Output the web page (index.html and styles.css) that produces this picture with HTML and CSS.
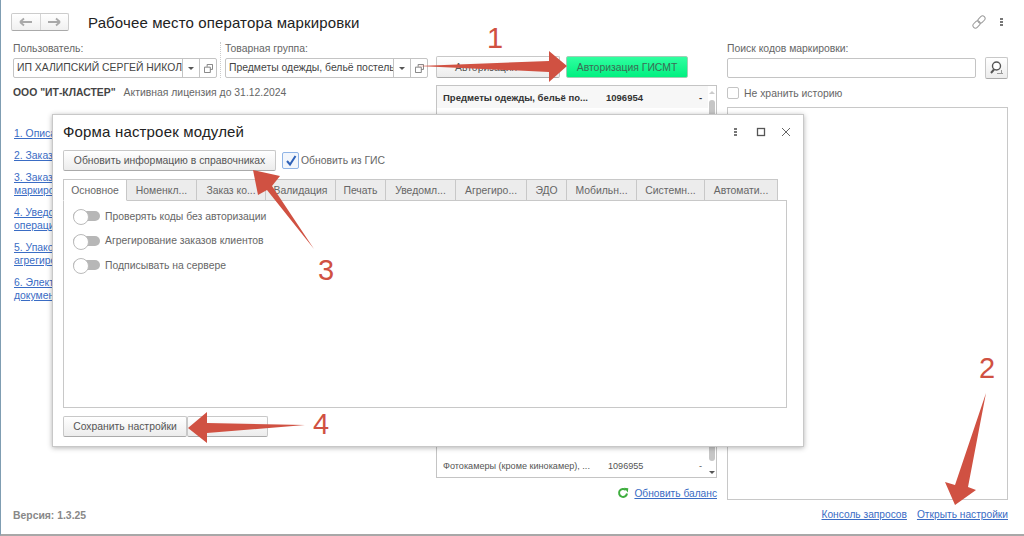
FILE: index.html
```html
<!DOCTYPE html>
<html lang="ru">
<head>
<meta charset="utf-8">
<title>Рабочее место оператора маркировки</title>
<link rel="stylesheet" href="styles.css">
</head>
<body>
<div class="page">
  <header class="head">
    <div class="nav">
      <button class="nav-btn"><svg width="16" height="10" viewBox="0 0 16 10"><path d="M2 5h12M2 5l4-3.500M2 5l4 3.500" fill="none" stroke="#a9a9a9" stroke-width="1.800"/></svg></button>
      <button class="nav-btn"><svg width="16" height="10" viewBox="0 0 16 10"><path d="M2 5h12M14 5l-4-3.500M14 5l-4 3.500" fill="none" stroke="#a9a9a9" stroke-width="1.800"/></svg></button>
    </div>
    <h1 class="title">Рабочее место оператора маркировки</h1>
    <div class="head-tools">
      <svg width="14" height="14" viewBox="0 0 14 14"><g transform="rotate(-45 7 7)" fill="none" stroke="#9a9a9a"><rect x="-0.500" y="4.500" width="8" height="5" rx="2.500"/><rect x="6.500" y="4.500" width="8" height="5" rx="2.500"/></g></svg>
      <span class="kebab"><i></i><i></i><i></i></span>
    </div>
  </header>

  <div class="main">
    <section class="col-left">
      <div class="fields">
        <div class="field">
          <label class="label">Пользователь:</label>
          <div class="combo">
            <span class="combo-text">ИП ХАЛИПСКИЙ СЕРГЕЙ НИКОЛАЕВИЧ</span>
            <span class="combo-btn"><b class="caret"></b></span>
            <span class="combo-btn"><svg width="9" height="9" viewBox="0 0 10 10"><path d="M3.500 3V.500h6V6H7M.500 3.500H7v6H.500z" fill="none" stroke="#777"/></svg></span>
          </div>
        </div>
        <div class="field field-sep">
          <label class="label">Товарная группа:</label>
          <div class="combo">
            <span class="combo-text">Предметы одежды, бельё постельное</span>
            <span class="combo-btn"><b class="caret"></b></span>
            <span class="combo-btn"><svg width="9" height="9" viewBox="0 0 10 10"><path d="M3.500 3V.500h6V6H7M.500 3.500H7v6H.500z" fill="none" stroke="#777"/></svg></span>
          </div>
        </div>
      </div>
      <p class="license"><b>ООО "ИТ-КЛАСТЕР"</b><span>Активная лицензия до 31.12.2024</span></p>
      <nav class="guide">
        <a href="#">1. Описание</a>
        <a href="#">2. Заказ</a>
        <a href="#">3. Заказ<br>маркировки</a>
        <a href="#">4. Уведомление<br>операции</a>
        <a href="#">5. Упаковка<br>агрегирование</a>
        <a href="#">6. Электронные<br>документы</a>
      </nav>
      <div class="version">Версия: 1.3.25</div>
    </section>

    <section class="col-center">
      <div class="auth">
        <button class="btn auth-btn">Авторизация</button>
        <button class="btn-green">Авторизация ГИСМТ</button>
      </div>
      <div class="list">
        <div class="rows">
          <div class="row row-bold"><span class="r-name">Предметы одежды, бельё по...</span><span class="r-code">1096954</span><span class="r-dash">-</span></div>
          <div class="row row-last"><span class="r-name">Фотокамеры (кроме кинокамер), ...</span><span class="r-code">1096955</span><span class="r-dash">-</span></div>
        </div>
        <div class="scroll"><b class="up"></b><i class="thumb"></i><b class="down"></b></div>
      </div>
      <div class="balance">
        <svg width="12" height="12" viewBox="0 0 12 12"><path d="M10 6.500A4 4 0 1 1 8.800 3" fill="none" stroke="#3fae3f" stroke-width="2"/><path d="M7 .8l4.300.4-.5 4.200z" fill="#3fae3f"/></svg>
        <a href="#">Обновить баланс</a>
      </div>
    </section>

    <section class="col-right">
      <label class="label">Поиск кодов маркировки:</label>
      <div class="search">
        <span class="input"></span>
        <button class="btn search-btn"><svg width="16" height="16" viewBox="0 0 16 16"><circle cx="7.500" cy="6" r="4" fill="#fff" stroke="#555" stroke-width="1.400"/><path d="M5 9.500l-3 3.500" stroke="#555" stroke-width="2"/><path d="M8 13.500h6M12.500 10v3.500" stroke="#999"/></svg></button>
      </div>
      <div class="nohist"><span class="check"></span>Не хранить историю</div>
      <div class="history"></div>
      <div class="bottom-links"><a href="#">Консоль запросов</a><a href="#">Открыть настройки</a></div>
    </section>
  </div>

  <div class="modal">
    <div class="m-head">
      <h2 class="m-title">Форма настроек модулей</h2>
      <div class="m-tools">
        <span class="kebab"><i></i><i></i><i></i></span>
        <svg width="10" height="10" viewBox="0 0 10 10"><rect x="1.500" y="1.500" width="7" height="7" fill="none" stroke="#555" stroke-width="1.300"/></svg>
        <svg class="m-close" width="10" height="10" viewBox="0 0 10 10"><path d="M1 1l8 8M9 1l-8 8" stroke="#666" stroke-width="1"/></svg>
      </div>
    </div>
    <div class="m-update">
      <button class="btn update-btn">Обновить информацию в справочниках</button>
      <span class="gis"><span class="check-on"><svg width="14" height="14" viewBox="0 0 14 14"><path d="M3 7l3 3.500L11.500 2" fill="none" stroke="#2f62b8" stroke-width="2"/></svg></span>Обновить из ГИС</span>
    </div>
    <div class="tabs">
      <span class="tab tab-on">Основное</span>
      <span class="tab">Номенкл...</span>
      <span class="tab">Заказ ко...</span>
      <span class="tab">Валидация</span>
      <span class="tab">Печать</span>
      <span class="tab">Уведомл...</span>
      <span class="tab">Агрегиро...</span>
      <span class="tab">ЭДО</span>
      <span class="tab">Мобильн...</span>
      <span class="tab">Системн...</span>
      <span class="tab">Автомати...</span>
    </div>
    <div class="panel">
      <div class="opt"><span class="toggle"></span>Проверять коды без авторизации</div>
      <div class="opt"><span class="toggle"></span>Агрегирование заказов клиентов</div>
      <div class="opt"><span class="toggle"></span>Подписывать на сервере</div>
    </div>
    <div class="m-foot">
      <button class="btn save-btn">Сохранить настройки</button>
      <button class="btn close-btn"></button>
    </div>
  </div>

  <svg class="marks" width="1024" height="536" viewBox="0 0 1024 536">
    <g fill="#d05142">
      <polygon points="418,66 549,61 549,51 567,66 549,82 549,72"/>
      <polygon points="986,393 968,487 976,490 955,505 945,482 955,485"/>
      <polygon points="314,249 267,190 258,195 253,170 280,176 272,186"/>
      <polygon points="305,425 207,423 207,412 188,428 207,443 207,433"/>
    </g>
    <g class="num">
      <text x="495" y="48">1</text>
      <text x="987" y="378">2</text>
      <text x="326" y="280">3</text>
      <text x="321" y="434">4</text>
    </g>
  </svg>
</div>
</body>
</html>
```
FILE: styles.css
```css
* { box-sizing: border-box; }
html, body { margin: 0; padding: 0; background: #fff; }
body { font: 10.400px "Liberation Sans", Arial, sans-serif; color: #555; }
button { font: inherit; color: inherit; padding: 0; }
a { color: #3a6cc4; text-decoration: underline; }

.page {
  position: relative;
  width: 1024px;
  height: 536px;
  overflow: hidden;
  border-left: 1px solid #7f9db2;
  border-bottom: 2px solid #a8a8a8;
  padding: 13px 15px 0 12px;
  display: flex;
  flex-direction: column;
}

.head { display: flex; align-items: center; height: 18px; margin-left: -2px; }
.nav { display: flex; width: 58px; height: 18px; border: 1px solid #ccc; border-bottom-color: #aaa; border-radius: 2px; background: linear-gradient(#fff, #f0f0f0); }
.nav-btn { flex: 1; border: 0; background: none; display: flex; align-items: center; justify-content: center; }
.nav-btn + .nav-btn { border-left: 1px solid #d5d5d5; }
.title { margin: 0 0 0 19px; font-size: 15px; font-weight: 400; color: #222; letter-spacing: .13px; }
.head-tools { margin-left: auto; display: flex; align-items: center; gap: 14px; padding-right: 6px; }
.kebab { display: inline-flex; flex-direction: column; gap: 1px; width: 3px; }
.kebab i { width: 3px; height: 2px; background: #777; }

.main { display: grid; grid-template-columns: 415px 281px 281px; column-gap: 8px; height: 483px; margin-top: 11px; }
.col-left, .col-center, .col-right { display: flex; flex-direction: column; min-width: 0; }
.col-right { margin: 0 -2px 0 2px; }

.fields { display: flex; gap: 8px; }
.field { width: 204px; }
.field-sep { position: relative; width: 203px; }
.field-sep::before { content: ""; position: absolute; left: -5px; top: 0; bottom: 0; border-left: 1px dotted #ccc; }
.label { display: block; height: 16px; line-height: 13px; color: #666; }
.combo { display: flex; height: 20px; border: 1px solid #c4c4c4; border-radius: 2px; background: #fff; }
.combo-text { flex: 1; min-width: 0; padding: 0 3px; line-height: 18px; color: #444; overflow: hidden; white-space: nowrap; }
.combo-btn { flex: none; width: 17px; border-left: 1px solid #c4c4c4; display: flex; align-items: center; justify-content: center; }
.caret { width: 0; height: 0; border: 3px solid transparent; border-top: 3px solid #555; border-bottom: 0; }

.license { margin: 8px 0 0; line-height: 14px; display: flex; gap: 8px; color: #666; }
.license b { color: #444; }

.guide { display: flex; flex-direction: column; gap: 9px; margin-top: 27px; padding-left: 1px; line-height: 13px; }
.guide a { display: block; white-space: nowrap; }
.version { margin-top: auto; margin-bottom: 4px; font-weight: 700; color: #888; }

.auth { display: flex; gap: 6px; padding-top: 14px; height: 36px; }
.btn { display: block; border: 1px solid #c8c8c8; border-bottom-color: #aaa; border-radius: 2px; background: linear-gradient(#fff, #ececec); color: #555; }
.auth-btn { width: 124px; text-align: left; padding-left: 18px; }
.btn-green { width: 122px; border: 1px solid #9ecfb4; border-radius: 2px; background: linear-gradient(#30ffa0, #00f080); color: #3d6b55; }

.list { flex: 1; min-height: 0; margin-top: 7px; border: 1px solid #c4c4c4; display: flex; }
.rows { flex: 1; display: flex; flex-direction: column; justify-content: space-between; }
.row { display: flex; height: 22px; align-items: center; padding-left: 6px; font-size: 9.500px; }
.row-bold { font-weight: 700; color: #333; background: #f7f7f7; }
.row-last { color: #555; font-size: 9.100px; }
.r-name { width: 163px; white-space: nowrap; }
.r-code { width: 93px; }
.row-last .r-code { margin-left: 2px; width: 91px; }
.scroll { width: 8px; padding: 5px 0 3px; display: flex; flex-direction: column; align-items: center; justify-content: space-between; }
.thumb { flex: 1; width: 6px; margin: 6px 0 10px; background: #c6c6c6; border-radius: 3px; }
.up { width: 0; height: 0; border: 3px solid transparent; border-bottom: 3px solid #ccc; border-top: 0; }
.down { width: 0; height: 0; border: 3px solid transparent; border-top: 3px solid #555; border-bottom: 0; }

.balance { display: flex; justify-content: flex-end; align-items: center; gap: 5px; height: 14px; margin: 8px 0 25px; font-size: 10.200px; }

.search { display: flex; align-items: center; gap: 9px; height: 20px; }
.input { flex: 1; height: 20px; border: 1px solid #c4c4c4; border-radius: 2px; }
.search-btn { width: 23px; height: 22px; flex: none; display: flex; align-items: center; justify-content: center; }
.nohist { display: flex; align-items: center; gap: 5px; height: 14px; margin-top: 8px; color: #666; }
.check { width: 12px; height: 12px; border: 1px solid #c4c4c4; border-radius: 2px; }
.history { flex: 1; min-height: 0; margin-top: 7px; border: 1px solid #c8c8c8; }
.bottom-links { display: flex; justify-content: flex-end; gap: 10px; height: 14px; margin: 9px 0 2px; font-size: 10.200px; }

.modal {
  position: absolute;
  left: 51px;
  top: 114px;
  width: 752px;
  height: 333px;
  background: #fff;
  border: 1px solid #c8c8c8;
  box-shadow: 0 1px 5px rgba(0,0,0,.3);
  padding: 0 15px 0 10px;
  display: flex;
  flex-direction: column;
}
.m-head { display: flex; align-items: center; height: 33px; margin-bottom: 2px; }
.m-title { margin: 0; font-size: 15px; font-weight: 400; color: #222; letter-spacing: .17px; }
.m-tools { margin: 0 -3px 0 auto; display: flex; align-items: center; gap: 19px; }
.m-close { margin-left: -4px; }
.m-update { display: flex; align-items: center; height: 21px; gap: 6px; }
.update-btn { width: 213px; height: 21px; }
.gis { display: flex; align-items: center; gap: 2px; color: #666; }
.check-on { width: 17px; height: 17px; border: 1px solid #8fb4e6; border-radius: 2px; display: flex; align-items: center; justify-content: center; background: #f2f6fc; }

.tabs { display: grid; grid-template-columns: 64px 70px 69px 70px 50px 70px 71px 40px 70px 68px 73px; width: 715px; height: 22px; margin-top: 8px; position: relative; }
.tab { background: #ececec; border: 1px solid #c8c8c8; border-left: 0; display: flex; align-items: center; justify-content: center; white-space: nowrap; color: #666; overflow: hidden; }
.tab:first-child { border-left: 1px solid #c8c8c8; }
.tab-on { background: #fff; border-bottom-color: #fff; }
.panel { height: 208px; width: 724px; margin-top: -1px; border: 1px solid #c8c8c8; padding: 3px 0 0 9px; }
.opt { display: flex; align-items: center; gap: 5px; height: 24.500px; color: #666; }
.toggle { position: relative; width: 27px; height: 10px; background: #b7b7b7; border-radius: 5px; }
.toggle::before { content: ""; position: absolute; left: 0; top: -2px; width: 14px; height: 14px; background: #fff; border: 1px solid #bbb; border-radius: 50%; }
.m-foot { display: flex; margin-top: 8px; height: 21px; }
.save-btn { width: 124px; }
.close-btn { width: 81px; }

.marks { position: absolute; left: -1px; top: 0; z-index: 2; pointer-events: none; }
.num text { font: 29px "Liberation Sans", Arial, sans-serif; fill: #d05142; text-anchor: middle; }
```
